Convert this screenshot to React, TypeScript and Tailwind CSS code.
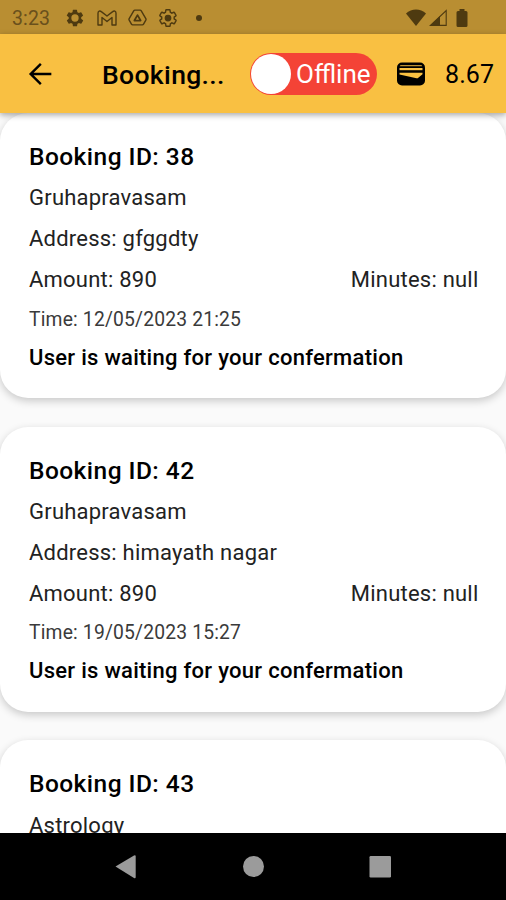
type Booking = {
  id: number;
  service: string;
  details?: {
    address: string;
    amount: number;
    time: string;
  };
};

const BOOKINGS: Booking[] = [
  { id: 38, service: "Gruhapravasam", details: { address: "gfggdty", amount: 890, time: "12/05/2023 21:25" } },
  { id: 42, service: "Gruhapravasam", details: { address: "himayath nagar", amount: 890, time: "19/05/2023 15:27" } },
  { id: 43, service: "Astrology" },
];

const GEAR =
  "M19.4 13a7.5 7.5 0 0 0 0-2l2.1-1.6a.5.5 0 0 0 .1-.6l-2-3.5a.5.5 0 0 0-.6-.2l-2.5 1a7.3 7.3 0 0 0-1.7-1l-.4-2.6a.5.5 0 0 0-.5-.4h-4a.5.5 0 0 0-.5.4L9 5.1a7.3 7.3 0 0 0-1.7 1l-2.5-1a.5.5 0 0 0-.6.2l-2 3.5a.5.5 0 0 0 .1.6L4.500 11a7.5 7.5 0 0 0 0 2l-2.1 1.6a.5.5 0 0 0-.1.6l2 3.5c.1.2.4.3.6.2l2.5-1a7.3 7.3 0 0 0 1.7 1l.4 2.6c0 .2.2.4.5.4h4c.2 0 .5-.2.5-.4l.4-2.6a7.3 7.3 0 0 0 1.7-1l2.5 1c.2.1.5 0 .6-.2l2-3.5a.5.5 0 0 0-.1-.6z";

function StatusBar() {
  return (
    <div className="flex h-[34px] shrink-0 items-center bg-[#b98e32] pt-px pl-3 text-[#4e3a10]">
      <span className="w-[53px] pt-[2px] text-[19.5px] leading-none tracking-[0.1px] text-[#69501c]">3:23</span>
      <svg viewBox="0 0 24 24" className="size-5" fill="currentColor" fillRule="evenodd">
        <path d={GEAR + "M12 7.600a4.400 4.400 0 1 0 0 8.800 4.400 4.400 0 0 0 0-8.800z"} />
      </svg>
      <svg viewBox="0 0 20 16" className="ml-3 h-4 w-5" fill="none" stroke="currentColor" strokeWidth="1.4" strokeLinejoin="round">
        <path d="M1 3.200C1 .8 3 .5 4.300 1.600L10 6l5.700-4.400C17 .5 19 .8 19 3.200V15h-4V7.500l-5 4-5-4V15H1z" />
      </svg>
      <svg viewBox="0 0 20 18" className="ml-[11px] h-[17px] w-[19px]" fill="none" stroke="currentColor" strokeWidth="1.5" strokeLinejoin="round">
        <path d="M7.300 1.200h5.400c.6 0 1 .3 1.300.8l4.800 8.300c.3.5.3 1 0 1.500l-2.400 4.200c-.3.5-.7.8-1.300.8H4.900c-.6 0-1-.3-1.300-.8l-2.400-4.200c-.3-.5-.3-1 0-1.500L6 2c.3-.5.7-.8 1.300-.8z" />
        <path d="M10 6.500l3.300 5.700H6.700z" strokeWidth="1.9" />
      </svg>
      <svg viewBox="0 0 24 24" className="ml-[11px] size-5" fill="none" stroke="currentColor" strokeWidth="1.7">
        <path d={GEAR} />
        <circle cx="12" cy="12" r="3.2" fill="currentColor" />
      </svg>
      <span className="ml-[18px] size-[6px] rounded-full bg-[#4e3a10]" />
      <svg viewBox="0 0 20 17" className="ml-[204px] h-[17px] w-5" fill="currentColor">
        <path d="M0 4.500C5.500-.9 14.500-.9 20 4.500L10 17z" />
      </svg>
      <svg viewBox="0 0 18 17" className="ml-[3px] h-[17px] w-[18px]">
        <path d="M11 7V17H.5z" fill="currentColor" />
        <path d="M1.500 16.400L17.200 1.500v14.900z" fill="none" stroke="currentColor" strokeWidth="1.1" />
      </svg>
      <svg viewBox="0 0 12 18" className="ml-[9px] h-[18px] w-3" fill="currentColor">
        <path d="M3.500 0h5v2H10a1.500 1.500 0 0 1 1.500 1.500v13A1.500 1.500 0 0 1 10 18H2a1.500 1.500 0 0 1-1.500-1.500v-13A1.500 1.500 0 0 1 2 2h1.500z" />
      </svg>
    </div>
  );
}

function BackIcon() {
  return (
    <svg viewBox="0 0 24 24" className="size-[34px]" fill="currentColor">
      <path d="M20 11.100H7.500l5.700-5.700L12 4.200 4.200 12l7.800 7.800 1.200-1.200-5.700-5.700H20z" />
    </svg>
  );
}

function WalletIcon() {
  return (
    <svg viewBox="0 0 28 24" className="h-6 w-7">
      <rect x="0" y="0.5" width="28" height="23" rx="5" fill="#000" />
      <path d="M2.800 4.300c0-1 .8-1.400 1.800-1.400h18.800c1 0 1.800.4 1.800 1.400z" fill="#b98e32" />
      <path d="M2.500 6h23v2.200h-23z" fill="#f9c042" />
      <path d="M2.500 10.800h23v1.400l-4.200 3.600c-.5.5-1.100.6-1.800.4L2.500 12.600z" fill="#f9c042" />
    </svg>
  );
}

function AppBar() {
  return (
    <header className="relative z-10 flex h-[79px] shrink-0 items-center bg-[#f9c042] pl-[23px] text-black shadow-[0_2px_6px_rgba(0,0,0,0.35)]">
      <BackIcon />
      <h1 className="ml-[45px] w-[148px] pt-[3px] text-[26.5px] leading-none font-medium tracking-[0.35px]">Booking...</h1>
      <div className="flex h-[42px] w-[127px] items-center rounded-full bg-[#f44336] p-px">
        <span className="size-10 shrink-0 rounded-full bg-white" />
        <span className="ml-[5px] pt-px text-[26px] leading-none text-white">Offline</span>
      </div>
      <div className="ml-5">
        <WalletIcon />
      </div>
      <span className="ml-[20px] pt-[2px] text-[25px] leading-none tracking-[0.1px]">8.67</span>
    </header>
  );
}

function BookingCard({ booking }: { booking: Booking }) {
  const { id, service, details } = booking;

  return (
    <article className="h-[285px] shrink-0 rounded-[28px] bg-white px-[29px] pt-[22px] text-[22px] leading-[40.7px] tracking-[0.22px] text-[#222] shadow-[0_3px_8px_rgba(0,0,0,0.2)]">
      <h2 className="text-[24.5px] leading-[43.4px] font-medium tracking-[0.45px] text-black">Booking ID: {id}</h2>
      <p>{service}</p>
      {details && (
        <>
          <p>Address: {details.address}</p>
          <div className="-mr-[1.5px] flex justify-between">
            <span>Amount: {details.amount}</span>
            <span>Minutes: null</span>
          </div>
          <p className="text-[19.3px] leading-[37px] tracking-[0.18px] text-[#3a3a3a]">Time: {details.time}</p>
          <p className="leading-[39px] font-medium tracking-[0.28px] text-black">User is waiting for your confermation</p>
        </>
      )}
    </article>
  );
}

function NavBar() {
  return (
    <nav className="relative z-10 h-[67px] shrink-0 bg-black">
      <svg viewBox="0 0 506 67" className="h-[67px] w-[506px]" fill="#9b9b9b">
        <path d="M115.500 33.500L134 22.500q1.700-.7 1.700 1v20.500q0 1.700-1.700 1z" />
        <circle cx="253.500" cy="33.500" r="10.500" />
        <rect x="369.500" y="23" width="21.500" height="21.500" rx="1.2" />
      </svg>
    </nav>
  );
}

export default function App() {
  return (
    <div className="flex h-[900px] w-[506px] flex-col overflow-hidden bg-[#fafafa] font-['Roboto',sans-serif]">
      <StatusBar />
      <AppBar />
      <main className="flex min-h-0 flex-1 flex-col gap-[28.7px] overflow-hidden">
        {BOOKINGS.map((b) => (
          <BookingCard key={b.id} booking={b} />
        ))}
      </main>
      <NavBar />
    </div>
  );
}
